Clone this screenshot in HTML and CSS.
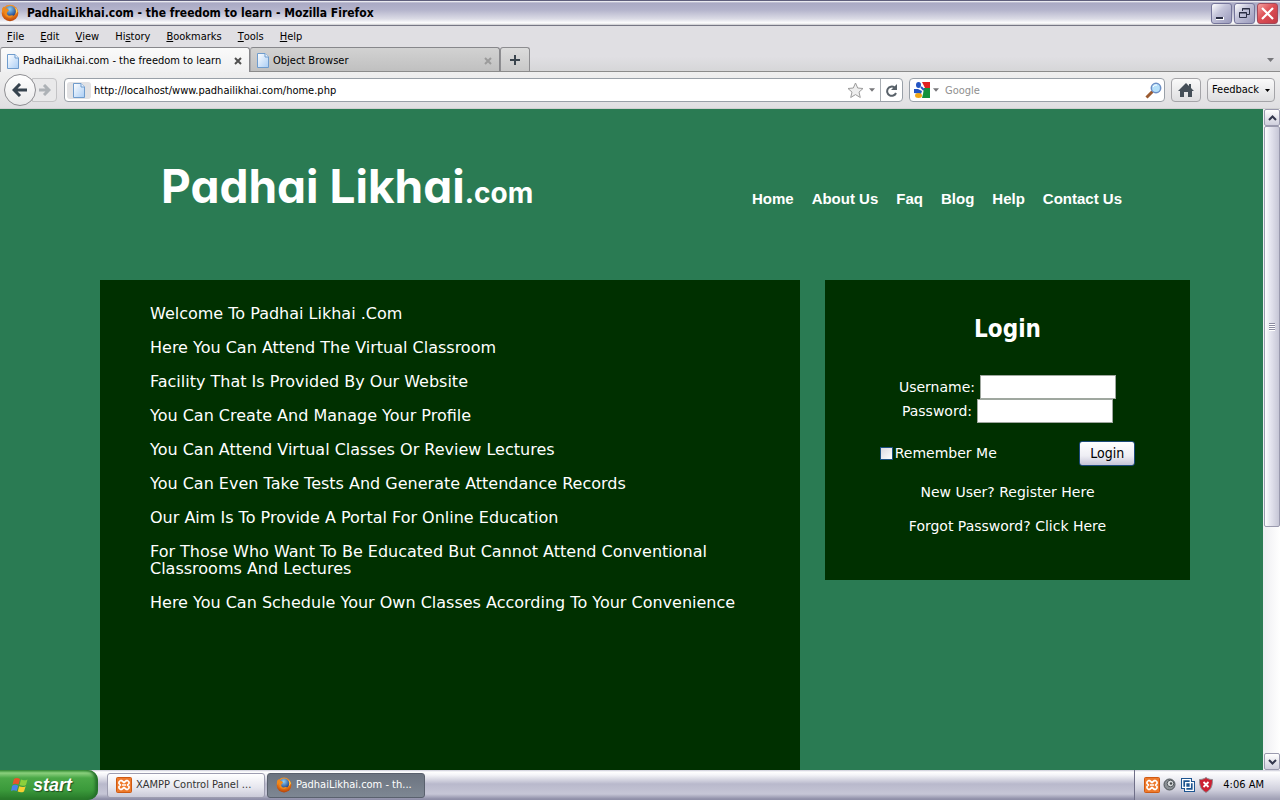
FILE: index.html
```html
<!DOCTYPE html>
<html lang="en">
<head>
<meta charset="utf-8">
<title>PadhaiLikhai.com - the freedom to learn</title>
<link rel="stylesheet" href="styles.css">
</head>
<body>
<svg class="defs" width="0" height="0" aria-hidden="true">
  <defs>
    <radialGradient id="fox" cx="50%" cy="30%" r="75%"><stop offset="0" stop-color="#ffc04a"/><stop offset=".55" stop-color="#ee7a12"/><stop offset="1" stop-color="#a8380a"/></radialGradient>
    <radialGradient id="globe" cx="45%" cy="30%" r="70%"><stop offset="0" stop-color="#8fd0f4"/><stop offset="1" stop-color="#1a3f86"/></radialGradient>
    <linearGradient id="sheet" x1="0" y1="0" x2="1" y2="1"><stop offset="0" stop-color="#fff"/><stop offset="1" stop-color="#a9cdf5"/></linearGradient>
    <symbol id="firefox" viewBox="0 0 18 18">
      <circle cx="9" cy="9" r="8.3" fill="url(#fox)"/>
      <circle cx="9.2" cy="7.4" r="5.6" fill="url(#globe)"/>
      <path d="M1.2 4.2 3 2.600l.8 1.700 2.700.2L8 6.500 6.300 8l-.5 2 2 1.700 3.200-.5 1.500.3c-1.200 2-4 2.600-6 1.500C3.500 11.500 3 8 3.300 6.200L1 9.500z" fill="#f08a1c"/>
      <path d="M14 3.500c1.600 2.700 1.300 5.500.2 7.200l2.400-3.200c-.3-2-1.300-3.300-2.600-4z" fill="#ffd557"/>
    </symbol>
    <symbol id="page" viewBox="0 0 12 15">
      <path d="M.5.5h7.500l3.500 3.500v10.500H.5z" fill="url(#sheet)" stroke="#6f9ccd"/>
      <path d="M8 .5v3.500h3.500" fill="#eaf3ff" stroke="#6f9ccd"/>
    </symbol>
    <symbol id="xampp" viewBox="0 0 16 16">
      <rect x=".5" y=".5" width="15" height="15" rx="1" fill="#ee7a2c" stroke="#cf5a12"/>
      <path d="M4.500 3.500h1L8 5.500l2.500-2h1l1.500 1.500v1.500L11.500 8 13 9.500V11l-1.500 1.500h-1L8 10.500l-2.500 2h-1L3 11V9.500L4.500 8 3 6.500V5zM6 8h4" fill="none" stroke="#fff" stroke-width="1.700" stroke-linejoin="round"/>
    </symbol>
    <symbol id="down" viewBox="0 0 7 4"><path d="M0 0h7L3.500 4z" fill="currentColor"/></symbol>
  </defs>
</svg>

<header class="titlebar">
  <svg class="icon18"><use href="#firefox"/></svg>
  <span class="titlebar-text">PadhaiLikhai.com - the freedom to learn - Mozilla Firefox</span>
  <button class="win-btn" aria-label="Minimize"><svg viewBox="0 0 19 19"><path d="M4 13h8v3H4z" fill="#fff"/><path d="M4 13h7v2H4z" fill="#2b2f45"/></svg></button>
  <button class="win-btn" aria-label="Restore"><svg viewBox="0 0 19 19"><g fill="none" stroke="#2b2f45"><path d="M7.500 7V4.500h7v6H12M7 5h8"/><path d="M4.500 8.500h7v5h-7zM4 9h8"/></g></svg></button>
  <button class="win-btn close" aria-label="Close"><svg viewBox="0 0 19 19"><path d="m4 4 11 11M15 4 4 15" stroke="#fff" stroke-width="2.200"/></svg></button>
</header>

<nav class="menubar" aria-label="Menu">
  <button><u>F</u>ile</button><button><u>E</u>dit</button><button><u>V</u>iew</button><button>Hi<u>s</u>tory</button><button><u>B</u>ookmarks</button><button><u>T</u>ools</button><button><u>H</u>elp</button>
</nav>

<div class="tabs">
  <button class="tab active"><svg class="icon-page"><use href="#page"/></svg><span>PadhaiLikhai.com - the freedom to learn</span><svg class="x" viewBox="0 0 8 8"><path d="m1 1 6 6M7 1 1 7"/></svg></button>
  <button class="tab"><svg class="icon-page"><use href="#page"/></svg><span>Object Browser</span><svg class="x" viewBox="0 0 8 8"><path d="m1 1 6 6M7 1 1 7"/></svg></button>
  <button class="tab-new" aria-label="New tab"><svg width="10" height="10"><path d="M5 0v10M0 5h10" stroke="#3a454e" stroke-width="2"/></svg></button>
  <svg class="tabs-more"><use href="#down"/></svg>
</div>

<div class="toolbar">
  <div class="history">
    <button class="back" aria-label="Back"><svg width="16" height="14" viewBox="0 0 16 14"><path d="M8 1 2 7l6 6M2 7h13" fill="none" stroke="#36434e" stroke-width="3"/></svg></button>
    <button class="forward" aria-label="Forward"><svg width="13" height="12" viewBox="0 0 13 12"><path d="m6 1 5 5-5 5M11 6H1" fill="none" stroke="#adb2b6" stroke-width="3"/></svg></button>
  </div>
  <div class="field url">
    <span class="site"><svg class="icon-page"><use href="#page"/></svg></span>
    <input type="text" aria-label="Address" value="http://localhost/www.padhailikhai.com/home.php">
    <svg class="star" viewBox="0 0 17 17"><path d="m8.500 1 2.200 5 5.300.5-4 3.600 1.300 5.400-4.800-2.900-4.800 2.900L5 10.100 1 6.500 6.300 6z" fill="#eee" stroke="#9c9c9c"/></svg>
    <svg class="caret"><use href="#down"/></svg>
    <button class="reload" aria-label="Reload"><svg width="13" height="13" viewBox="0 0 13 13"><path d="M9.500 3.500A4.600 4.600 0 1 0 11 9" fill="none" stroke="#59626a" stroke-width="2"/><path d="M12 0v6H6z" fill="#59626a"/></svg></button>
  </div>
  <div class="field search">
    <svg class="google" viewBox="0 0 16 16"><path d="M0 0h16v16H0z" fill="#fff"/><path d="M8 0h8v6h-5z" fill="#e02020"/><path d="M10 6h6v10H8l1-4z" fill="#12913d"/><path d="M0 7h4l4 2-1 3-7-1z" fill="#2455c3"/><ellipse cx="4.500" cy="3" rx="2.500" ry="3" fill="#2455c3"/><path d="m7 5 3 3" stroke="#2455c3" stroke-width="2"/><ellipse cx="4.500" cy="13.500" rx="3.500" ry="2.500" fill="#f3a712"/></svg>
    <svg class="caret"><use href="#down"/></svg>
    <input type="text" aria-label="Search" placeholder="Google">
    <svg class="lens" viewBox="0 0 17 17"><path d="m1.500 15.500 6-6" stroke="#9b5b31" stroke-width="3"/><circle cx="11" cy="6" r="4.700" fill="#b5e0fa" stroke="#6c8fc6" stroke-width="1.500"/><path d="M8 5a3.500 3.500 0 0 1 4-2" stroke="#fff" fill="none"/></svg>
  </div>
  <button class="tool-btn home" aria-label="Home page"><svg width="16" height="14" viewBox="0 0 16 14"><path d="m8 0 3 3V1h2v4l3 3h-2v6h-4V9H6v5H2V8H0z" fill="#454f58"/></svg></button>
  <button class="tool-btn feedback">Feedback <svg><use href="#down"/></svg></button>
</div>

<div class="viewport">
  <div class="site-page">
    <div class="masthead">
      <h1 class="logo">Padhai Likhai<small>.com</small></h1>
      <nav class="site-nav" aria-label="Site">
        <a href="#">Home</a><a href="#">About Us</a><a href="#">Faq</a><a href="#">Blog</a><a href="#">Help</a><a href="#">Contact Us</a>
      </nav>
    </div>
    <div class="columns">
      <main class="intro">
        <p>Welcome To Padhai Likhai .Com</p>
        <p>Here You Can Attend The Virtual Classroom</p>
        <p>Facility That Is Provided By Our Website</p>
        <p>You Can Create And Manage Your Profile</p>
        <p>You Can Attend Virtual Classes Or Review Lectures</p>
        <p>You Can Even Take Tests And Generate Attendance Records</p>
        <p>Our Aim Is To Provide A Portal For Online Education</p>
        <p>For Those Who Want To Be Educated But Cannot Attend Conventional Classrooms And Lectures</p>
        <p>Here You Can Schedule Your Own Classes According To Your Convenience</p>
      </main>
      <form class="login">
        <h2>Login</h2>
        <div class="row"><label for="user">Username:</label><input id="user" type="text"></div>
        <div class="row"><label for="pass">Password:</label><input id="pass" type="password"></div>
        <div class="actions">
          <label class="remember"><input type="checkbox">Remember Me</label>
          <button class="submit" type="button">Login</button>
        </div>
        <a href="#">New User? Register Here</a>
        <a href="#">Forgot Password? Click Here</a>
      </form>
    </div>
  </div>
  <div class="scrollbar">
    <button class="scroll-btn" aria-label="Scroll up"><svg viewBox="0 0 9 6"><path d="m1 5 3.500-3.500L8 5"/></svg></button>
    <div class="track"><div class="thumb"><i></i></div></div>
    <button class="scroll-btn" aria-label="Scroll down"><svg viewBox="0 0 9 6"><path d="m1 1 3.500 3.500L8 1"/></svg></button>
  </div>
</div>

<footer class="taskbar">
  <button class="start">
    <svg viewBox="0 0 18 18"><path d="M3 3c2-1.500 4-1 6 0L7.500 8.500c-2-1-4-1.300-6 0z" fill="#e8542a"/><path d="M10 3.500c2 1 4 1.200 6.500 0L15 9c-2 1.200-4.500 1-6.500 0z" fill="#8cd03c"/><path d="M1.200 9.700c2-1.300 4-1 6 0L5.700 15c-2-1-4-1.200-5.700 0z" fill="#4a83ea"/><path d="M8.200 10.200c2 1 4.300 1.200 6.500 0L13 15.500c-2 1.200-4.300 1-6.300 0z" fill="#f8cf32"/></svg>start</button>
  <button class="task"><svg class="icon16"><use href="#xampp"/></svg>XAMPP Control Panel ...</button>
  <button class="task current"><svg class="icon16"><use href="#firefox"/></svg>PadhaiLikhai.com - th...</button>
  <div class="tray">
    <svg class="icon16"><use href="#xampp"/></svg>
    <svg viewBox="0 0 14 14" width="14" height="14"><circle cx="6.500" cy="6.500" r="5.500" fill="#8b9095" stroke="#4d5358"/><circle cx="7.500" cy="5.500" r="3.300" fill="#d9dcde" stroke="#52585d"/><circle cx="8" cy="5.500" r="1.200" fill="#43484c"/></svg>
    <svg viewBox="0 0 16 16" width="16" height="16"><path d="M1 1h11v3h3v11H4v-3H1z" fill="#1d5590"/><g fill="none" stroke="#fff" stroke-width="1.300"><path d="M2.700 2.700h7.600v7.600H2.700zM5.700 5.700h7.600v7.600H5.700z"/></g></svg>
    <svg viewBox="0 0 14 16" width="14" height="16"><path d="M7 .5c2 1.500 4 2 6.500 2 0 6-1 10-6.500 13C1.500 12.500.5 8.500.5 2.500 3 2.500 5 2 7 .5z" fill="#cc2132" stroke="#8e8e94"/><path d="m4.500 5 5 5m0-5-5 5" stroke="#fff" stroke-width="1.800"/></svg>
    <time>4:06 AM</time>
  </div>
</footer>
</body>
</html>
```
FILE: styles.css
```css
* { box-sizing: border-box; }
body {
  margin: 0;
  height: 100vh;
  display: flex;
  flex-direction: column;
  overflow: hidden;
  background: #e0dfe3;
  color: #000;
  font: 11px/14px "DejaVu Sans Condensed", "Noto Sans", sans-serif;
}
button, input { font: inherit; color: inherit; margin: 0; padding: 0; border: 0; background: none; }
button { display: flex; align-items: center; white-space: nowrap; }
svg { flex: none; display: block; }
.defs { position: absolute; }
.icon16 { width: 16px; height: 16px; }
.icon18 { width: 18px; height: 18px; }
.icon-page { width: 12px; height: 15px; }

.titlebar {
  display: flex;
  align-items: center;
  gap: 2px;
  height: 26px;
  flex: none;
  padding: 0 2px 0 1px;
  border-top: 1px solid #5f5f7d;
  border-bottom: 1px solid #777785;
  background: linear-gradient(#fff 0, #a9a9c4 2px, #b4b4cc 9px, #dcdce6 18px, #fff 22px, #c8c8cc 24px);
}
.titlebar-text { flex: 1; padding-left: 6px; font-size: 12px; font-weight: bold; }
.win-btn {
  width: 21px;
  height: 21px;
  border: 1px solid #75759a;
  border-radius: 3px;
  background: linear-gradient(135deg, #fff, #c4c4da 40%, #9a9abb);
}
.win-btn svg { width: 19px; height: 19px; }
.win-btn.close { border-color: #a2495a; background: linear-gradient(135deg, #f4a0a0, #dd4f55 45%, #c23a45); }

.menubar { display: flex; gap: 16px; height: 21px; flex: none; padding-left: 7px; align-items: center; }

.tabs {
  display: flex;
  height: 25px;
  flex: none;
  border-bottom: 1px solid #8b8b8b;
  background: linear-gradient(#e0dfe3 40%, #d6d6d8);
}
.tab {
  width: 250px;
  gap: 4px;
  padding: 2px 7px 0 6px;
  border: 1px solid #87878b;
  border-left-color: #a5a5a9;
  border-bottom: 0;
  border-radius: 3px 3px 0 0;
  background: linear-gradient(#d2d2d2, #c0c0c0);
}
.tab span { flex: 1; text-align: left; }
.tab.active { height: 25px; background: linear-gradient(#fafafa, #f0f0f1); }
.x { width: 8px; height: 8px; stroke: #9b9b9b; stroke-width: 2; }
.active .x { stroke: #505050; }
.tab-new {
  width: 30px;
  justify-content: center;
  border: 1px solid #8d8d90;
  border-bottom: 0;
  border-radius: 3px 3px 0 0;
  background: linear-gradient(#dcdcdc, #c8c8c8);
}
.tabs-more { width: 7px; height: 4px; margin: 11px 6px 0 auto; color: #77777b; }

.toolbar {
  display: flex;
  align-items: center;
  gap: 6px;
  height: 37px;
  flex: none;
  padding: 0 5px 0 4px;
  border-bottom: 1px solid #cfcfd1;
  background: linear-gradient(#efefef, #e0dfe2);
}
.history { display: flex; align-items: center; margin-right: 1px; }
.back {
  position: relative;
  width: 32px;
  height: 32px;
  justify-content: center;
  border: 1px solid #8e8e92;
  border-radius: 50%;
  background: linear-gradient(#fff, #e9e9ea);
}
.forward {
  width: 25px;
  height: 24px;
  margin-left: -4px;
  padding-left: 5px;
  border: 1px solid #c3c3c5;
  border-radius: 0 4px 4px 0;
  background: #e9e9ea;
}
.field {
  display: flex;
  align-items: center;
  height: 24px;
  border: 1px solid #99a0a8;
  border-radius: 4px;
  background: #fff;
}
.field input { flex: 1; min-width: 0; padding-top: 2px; outline: 0; }
.url { flex: 1; }
.site { display: flex; justify-content: center; width: 24px; padding: 1px 0; margin: 0 3px 0 2px; border-radius: 3px; background: #e2e2e4; }
.star { width: 17px; height: 17px; }
.caret { width: 6px; height: 4px; margin: 0 5px; color: #77777a; }
.reload { width: 22px; height: 22px; justify-content: center; border-left: 1px solid #a9aeb3; }
.search { width: 256px; padding: 0 2px 0 4px; }
.search .caret { margin: 0 6px 0 3px; }
.search input::placeholder { color: #8f8f8f; opacity: 1; }
.google { width: 16px; height: 16px; }
.lens { width: 17px; height: 17px; }
.tool-btn {
  height: 24px;
  justify-content: center;
  border: 1px solid #a4a4a8;
  border-radius: 4px;
  background: linear-gradient(#fafafa, #dedee0);
}
.home { width: 30px; }
.feedback { width: 68px; gap: 6px; }
.feedback svg { width: 5px; height: 3px; }

.viewport { display: flex; flex: 1; min-height: 0; }
.site-page {
  flex: 1;
  min-width: 0;
  display: flex;
  flex-direction: column;
  padding: 0 73px 0 100px;
  overflow: hidden;
  background: #2a7b53;
  color: #fff;
}
.masthead {
  display: flex;
  justify-content: space-between;
  align-items: flex-start;
  padding: 45px 68px 0 61px;
  height: 171px;
  flex: none;
}
.logo { margin: 0; font: 700 46px/64px "Comic Sans MS", Inter, sans-serif; font-feature-settings: "cv11"; }
.logo small { font-size: 28px; }
.site-nav { display: flex; gap: 18px; margin-top: 36px; font: bold 15px/18px "Liberation Sans", Arial, sans-serif; }
.site-page a { color: inherit; text-decoration: none; }
.columns { display: grid; grid-template-columns: 700fr 365fr; gap: 25px; flex: 1; min-height: 0; }
.intro {
  padding: 25px 50px 0;
  background: #003000;
  font: 16px/17px "DejaVu Sans", Verdana, sans-serif;
}
.intro p { margin: 0 0 17px; }
.login {
  display: flex;
  flex-direction: column;
  align-items: center;
  align-self: start;
  padding: 34px 0 45px;
  background: #003000;
  font: 14px/17px "DejaVu Sans", Verdana, sans-serif;
}
.login h2 { margin: 0 0 31px; font: bold 24px/30px "DejaVu Sans Condensed", "Noto Sans", sans-serif; }
.row { display: flex; align-items: center; gap: 5px; }
.row input { width: 136px; height: 24px; border: 1px solid #9fa79f; background: #fff; color: #000; }
.actions { display: flex; justify-content: space-between; align-items: center; width: 70%; margin: 18px 0; }
.remember { display: flex; align-items: center; gap: 2px; }
.remember input { appearance: none; width: 13px; height: 13px; border: 1px solid #1c5180; background: linear-gradient(135deg, #d9d9df, #fff); }
.submit {
  height: 25px;
  width: 56px;
  justify-content: center;
  border: 1px solid #1c4a7a;
  border-radius: 3px;
  background: linear-gradient(#fff, #eeeef4 60%, #c6c5d7);
  color: #000;
  font-family: "DejaVu Sans Condensed", "Noto Sans", sans-serif;
}
.login > a + a { margin-top: 17px; }

.scrollbar { display: flex; flex-direction: column; width: 17px; padding-left: 1px; background: linear-gradient(90deg, #eeeef2, #fff); }
.scroll-btn { height: 17px; justify-content: center; border: 1px solid #9a9aae; border-radius: 2px; background: linear-gradient(#fff, #cfcfdd); }
.scroll-btn svg { width: 9px; height: 6px; fill: none; stroke: #33374d; stroke-width: 2; }
.track { flex: 1; }
.thumb {
  display: flex;
  align-items: center;
  justify-content: center;
  height: 64%;
  border: 1px solid #9a9aae;
  border-radius: 2px;
  background: linear-gradient(90deg, #fff, #e4e4ee 40%, #c6c6d6);
}
.thumb i { width: 6px; height: 8px; background: repeating-linear-gradient(#8b8ba0 0 1px, #fff 1px 2px); }

.taskbar {
  display: flex;
  align-items: center;
  gap: 2px;
  height: 30px;
  flex: none;
  background: linear-gradient(#c9c9d6 0, #fff 2px, #f4f4f8 5px, #b9b9cc 14px, #c6c6d6 24px, #8f8fa8 29px);
}
.start {
  width: 98px;
  height: 30px;
  gap: 4px;
  padding-left: 11px;
  margin-right: 7px;
  border-radius: 0 10px 10px 0;
  background: linear-gradient(#3c9a3c 0, #8cd07e 3px, #4aa847 8px, #3b9a3b 20px, #2a7d2c 28px);
  box-shadow: inset -3px 0 3px #25702a;
  color: #fff;
  font: italic bold 18px/22px "Liberation Sans", Arial, sans-serif;
  text-shadow: 1px 1px 1px #1d4d1f;
}
.start svg { width: 18px; height: 18px; }
.task {
  width: 158px;
  height: 25px;
  gap: 4px;
  padding-left: 8px;
  border: 1px solid #9d9db0;
  border-radius: 3px;
  background: linear-gradient(#fff, #e6e6ee 60%, #cacad8);
  color: #333;
}
.task.current { border-color: #59606d; background: linear-gradient(#6c7480, #7e8793); color: #fff; }
.tray {
  display: flex;
  align-items: center;
  gap: 3px;
  height: 30px;
  margin-left: auto;
  padding: 0 16px 0 9px;
  border-left: 1px solid #6f6f88;
  background: linear-gradient(#c9c9d6 0, #fff 2px, #f0f0f5 8px, #cfcfdc 20px, #a0a0b5 29px);
}
.tray time { margin-left: 7px; }
```
